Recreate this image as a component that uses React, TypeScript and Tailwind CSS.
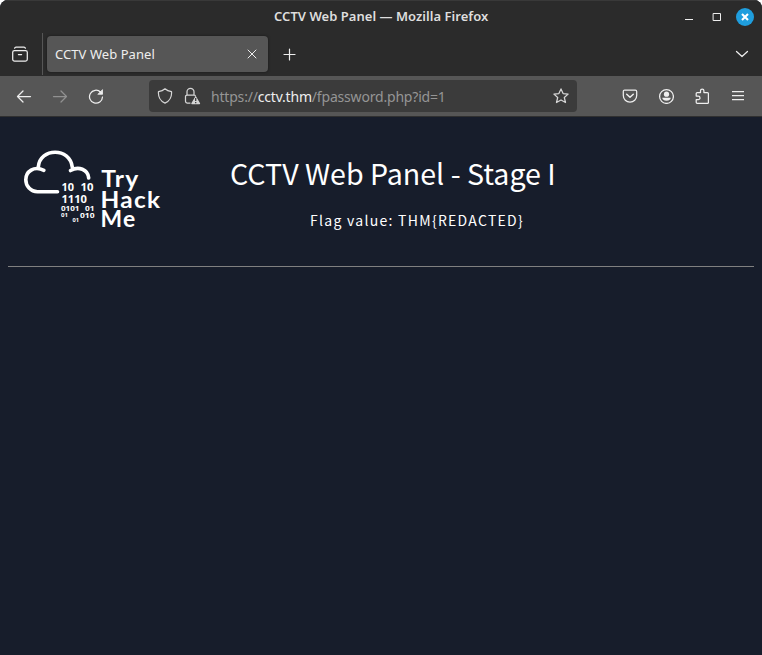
import type { ReactNode } from "react";

function Icon({ children, size = 16, className = "" }: { children: ReactNode; size?: number; className?: string }) {
  return (
    <svg
      width={size}
      height={size}
      viewBox={`0 0 ${size} ${size}`}
      fill="none"
      stroke="currentColor"
      strokeWidth="1.25"
      strokeLinecap="round"
      strokeLinejoin="round"
      className={`block shrink-0 ${className}`}
    >
      {children}
    </svg>
  );
}

function TitleBar() {
  return (
    <header className="grid h-8 grid-cols-[1fr_auto_1fr] items-center border-t border-[#393939] bg-[#2b2b2b]">
      <span />
      <h1 className="w-[214px] whitespace-nowrap font-['Noto_Sans',sans-serif] text-[13px] font-semibold tracking-[0.03px] text-[#dedede]">
        CCTV Web Panel — Mozilla Firefox
      </h1>
      <div className="flex items-center justify-end pr-2 text-[#eeeeee]">
        <Icon size={10} className="mr-[18px]">
          <path d="M1 7.5h8" strokeWidth="1" strokeLinecap="butt" />
        </Icon>
        <Icon size={10} className="mr-[14px]">
          <path d="M1.5 1.5h7v7h-7z" strokeLinejoin="miter" strokeWidth="1" />
        </Icon>
        <span className="flex size-[18px] items-center justify-center rounded-full bg-[#1f9ede] text-white">
          <Icon size={10}>
            <path d="M2 2l6 6M8 2l-6 6" strokeWidth="2.1" strokeLinecap="butt" />
          </Icon>
        </span>
      </div>
    </header>
  );
}

function TabStrip() {
  return (
    <div className="flex h-11 items-center bg-[#2b2b2b] text-[#eeeeee]">
      <Icon size={18} className="ml-[11px]">
        <path d="M3.5 5.500h11a1.800 1.800 0 0 1 1.800 1.800v6.900a1.800 1.800 0 0 1-1.800 1.800h-11a1.800 1.800 0 0 1-1.800-1.800V7.300a1.800 1.800 0 0 1 1.800-1.800zM7.400 9.500h3.200" />
        <path d="M3.600 3.200Q4 2 5 2h8q1 0 1.400 1.200" />
      </Icon>
      <span className="ml-[13px] h-[42px] w-px bg-[#565656]" />
      <div className="ml-1 flex h-9 w-[221px] items-center justify-between rounded bg-[#565656] pl-2 pr-[9px] shadow-[0_0_3px_rgba(0,0,0,0.45)]">
        <span className="whitespace-nowrap pt-0.5 font-['Noto_Sans',sans-serif] text-[13px] tracking-[0.06px] text-[#eeeeee]">
          CCTV Web Panel
        </span>
        <Icon size={14}>
          <path d="M3 3l8 8M11 3l-8 8" strokeWidth="1" />
        </Icon>
      </div>
      <Icon size={15} className="ml-[14px]">
        <path d="M7.500 2v11M2 7.500h11" strokeWidth="1.200" />
      </Icon>
      <Icon size={14} className="ml-auto mr-[13px]">
        <path d="M1.500 4.500L7 9.500l5.500-5" />
      </Icon>
    </div>
  );
}

function AddressBar() {
  return (
    <div className="ml-[45px] flex h-8 w-[428px] items-center rounded bg-[#3b3b3b] pl-2 pr-2 text-[#d5d5d5]">
      <Icon>
        <path d="M8 .8C6.200 2.500 3.800 3.300 1.500 3.600 1 8.500 3.400 13.300 8 15.200c4.600-1.900 7-6.700 6.500-11.600C12.200 3.300 9.800 2.500 8 .8z" />
      </Icon>
      <Icon size={18} className="ml-[10px]">
        <path d="M7 16H4.200A1.700 1.700 0 0 1 2.500 14.300V9.700A1.700 1.700 0 0 1 4.200 8h6.600a1.700 1.700 0 0 1 1.700 1.200M4 8V4.800a3.500 3.500 0 0 1 7 0V8" />
        <path d="M12.700 10l3.800 6.500H8.900z" fill="currentColor" strokeWidth="1.300" />
        <path d="M12.700 11v3M12.700 15v1.300" stroke="#3b3b3b" strokeWidth="1.300" strokeLinecap="butt" />
      </Icon>
      <span className="ml-[10px] whitespace-nowrap pt-0.5 font-['Noto_Sans',sans-serif] text-sm tracking-[-0.19px] text-[#959595]">
        https://<span className="text-[#eeeeee]">cctv.thm</span>/fpassword.php?id=1
      </span>
      <Icon className="ml-auto">
        <path d="M8 .9l2.100 4.700 5 .5-3.800 3.400 1.200 5L8 12l-4.500 2.500 1.200-5L.9 6.100l5-.5z" />
      </Icon>
    </div>
  );
}

function Toolbar() {
  return (
    <div className="flex h-[41px] items-center border-b border-[#303030] bg-[#565656] text-[#eeeeee]">
      <Icon className="ml-4">
        <path d="M1.500 8.500h13M7 3L1.500 8.500 7 14" />
      </Icon>
      <Icon className="ml-5 text-[#919191]">
        <path d="M1.500 8.500h13M9 3l5.500 5.500L9 14" />
      </Icon>
      <Icon className="ml-5">
        <path d="M14.500 9A6.500 6.500 0 1 1 12.500 4l1.300 1.300" />
        <path d="M14.500 2v4.300h-4.300z" fill="currentColor" strokeWidth=".8" />
      </Icon>
      <AddressBar />
      <div className="ml-auto flex items-center gap-5 pr-4">
        <Icon>
          <path d="M2.700 2h10.600q1.400 0 1.400 1.400v4.100a6.700 6.700 0 0 1-13.400 0V3.400Q1.300 2 2.700 2z" />
          <path d="M4.700 6.200L8 9.200l3.300-3" strokeWidth="1.500" />
        </Icon>
        <Icon>
          <circle cx="8.500" cy="8.500" r="6.900" />
          <circle cx="8.500" cy="6.200" r="2.600" fill="currentColor" stroke="none" />
          <path d="M4.300 9.800h8.400c0 1.600-1.500 3-4.200 3s-4.200-1.400-4.200-3z" fill="currentColor" stroke="none" />
        </Icon>
        <Icon>
          <path d="M2.200 5.600q0-1 1-1H6.500V2.800a1.700 1.700 0 0 1 3.400 0v1.800h3.500q1 0 1 1v8.800q0 .9-1 .9H3.200q-1 0-1-1v-2.600h2a1.800 1.800 0 0 0 0-3.600h-2z" />
        </Icon>
        <Icon>
          <path d="M2 3.500h12M2 7.500h12M2 11.500h12" strokeLinecap="butt" />
        </Icon>
      </div>
    </div>
  );
}

function Logo() {
  return (
    <svg width="145" height="90" viewBox="20 145 145 90" className="block shrink-0" fill="#ffffff" role="img">
      <g fill="none" stroke="#ffffff" strokeWidth="3.600" strokeLinecap="round">
        <path d="M57.500 191.700H37.500C30.500 191.700 25.800 186 25.800 179.800C25.800 171.500 34 165.500 43.900 170.300" />
        <path d="M38.300 167C40 147.500 70 147 72.300 167.300" />
        <path d="M70.500 170.500C78.500 165.700 88 169.500 88.700 178" />
      </g>
      <g className="font-['Open_Sans',sans-serif] font-bold">
        <text x="61.500" y="190.500" fontSize="11" textLength="12.500" lengthAdjust="spacingAndGlyphs">10</text>
        <text x="80.500" y="190.500" fontSize="11" textLength="13" lengthAdjust="spacingAndGlyphs">10</text>
        <text x="61.500" y="202.500" fontSize="11" textLength="25.500" lengthAdjust="spacingAndGlyphs">1110</text>
        <text x="61" y="211" fontSize="7.500" textLength="18.500" lengthAdjust="spacingAndGlyphs">0101</text>
        <text x="85" y="211" fontSize="7.500" textLength="9.500" lengthAdjust="spacingAndGlyphs">01</text>
        <text x="61" y="217.300" fontSize="5.500" textLength="7" lengthAdjust="spacingAndGlyphs">01</text>
        <text x="80" y="217.500" fontSize="7.500" textLength="14.500" lengthAdjust="spacingAndGlyphs">010</text>
        <text x="72.500" y="222.200" fontSize="5.500" textLength="6.500" lengthAdjust="spacingAndGlyphs">01</text>
      </g>
      <g className="font-['Lato',sans-serif] font-bold tracking-[1.2px]" fontSize="22">
        <text x="101.200" y="187" textLength="38.500" lengthAdjust="spacingAndGlyphs">Try</text>
        <text x="100.500" y="208" textLength="61" lengthAdjust="spacingAndGlyphs">Hack</text>
        <text x="100.500" y="227" textLength="36" lengthAdjust="spacingAndGlyphs">Me</text>
      </g>
    </svg>
  );
}

export default function App() {
  return (
    <div className="bg-white">
      <div className="flex h-[655px] w-[762px] flex-col overflow-hidden rounded-t-lg bg-[#171d2b]">
        <TitleBar />
        <TabStrip />
        <Toolbar />
        <main className="flex-1 bg-[#171d2b] px-2 font-['Noto_Sans_CJK_SC',sans-serif] text-white">
          <section className="flex h-[150px] border-b border-[#808080] pl-3 pt-7">
            <Logo />
            <div className="ml-[65px] pt-2">
              <h2 className="whitespace-nowrap text-[28.6px] leading-10">CCTV Web Panel - Stage I</h2>
              <p className="ml-20 mt-[17px] whitespace-nowrap text-sm leading-5 tracking-[1.28px]">Flag value: THM&#123;REDACTED&#125;</p>
            </div>
          </section>
        </main>
      </div>
    </div>
  );
}
